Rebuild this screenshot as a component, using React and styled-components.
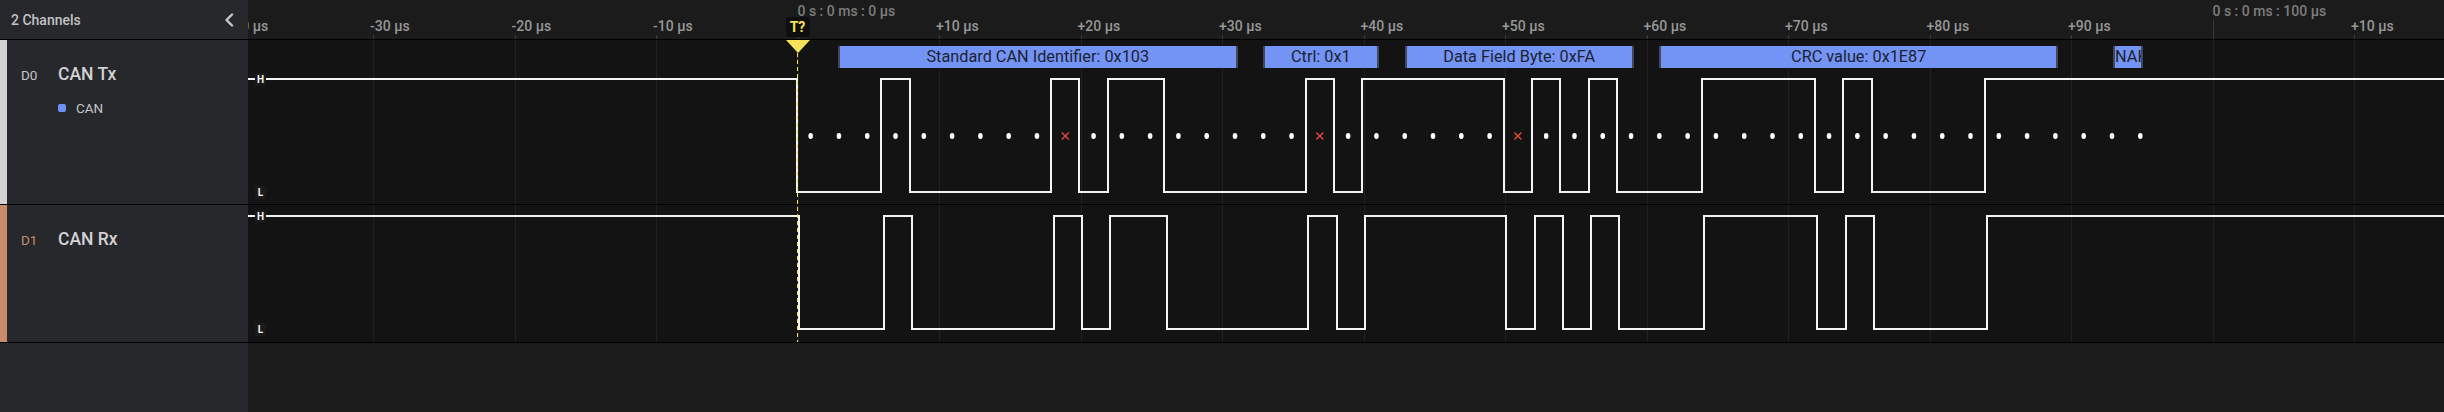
import React from "react";
import styled, { createGlobalStyle } from "styled-components";

const SIDEBAR_W = 248;
const TRACK_W = 2444 - SIDEBAR_W;
const T0 = 797.5 - SIDEBAR_W; // trigger, in track coordinates
const PX_PER_10US = 141.5;
const BIT = 28.29;

// CAN frame bits (1 = recessive/high), id 0x103, dlc 1, data 0xFA, crc 0x1E87, NAK
const BITS = [
  0, 0, 0, 1, 0, 0, 0, 0, 0, 1, 0, 1, 1, 0, 0, 0, 0, 0, 1, 0, 1, 1, 1, 1, 1, 0,
  1, 0, 1, 0, 0, 0, 1, 1, 1, 1, 0, 1, 0, 0, 0, 0, 1, 1, 1, 1, 1, 1,
];
const STUFF_BITS = [9, 18, 25];

const ANNOTATIONS = [
  { from: 838, to: 1237.5, label: "Standard CAN Identifier: 0x103" },
  { from: 1262.7, to: 1379, label: "Ctrl: 0x1" },
  { from: 1404.7, to: 1633.6, label: "Data Field Byte: 0xFA" },
  { from: 1659.2, to: 2058.3, label: "CRC value: 0x1E87" },
  { from: 2113, to: 2143.3, label: "NAK" },
];

const GlobalStyle = createGlobalStyle`
  html, body {
    margin: 0;
    padding: 0;
    height: 412px;
    overflow: hidden;
    background: #1b1b1b;
  }
  body {
    font-family: Roboto, "Noto Sans", "Liberation Sans", sans-serif;
  }
`;

const Page = styled.div`
  display: flex;
  width: 2444px;
  height: 412px;
  background: #1b1b1b;
`;

const Sidebar = styled.aside`
  width: ${SIDEBAR_W}px;
  flex: none;
  display: flex;
  flex-direction: column;
  background: #27282c;
`;

const SidebarHeader = styled.div`
  height: 39px;
  border-bottom: 1px solid #000;
  display: flex;
  align-items: center;
  justify-content: space-between;
  padding: 0 14px 0 11px;
`;

const HeaderTitle = styled.span`
  font-size: 14px;
  font-weight: 500;
  color: #c2c2c4;
`;

const ChannelRow = styled.div`
  height: ${(p) => p.h}px;
  border-bottom: 1px solid #000;
  display: flex;
`;

const ColorBar = styled.div`
  width: 7px;
  flex: none;
  background: ${(p) => p.color};
`;

const ChannelInfo = styled.div`
  padding: 23px 0 0 14px;
  display: flex;
  flex-direction: column;
`;

const NameLine = styled.div`
  display: flex;
  align-items: baseline;
  line-height: 22px;
`;

const ChannelIndex = styled.span`
  width: 37px;
  font-size: 13.5px;
  color: ${(p) => p.color};
`;

const ChannelName = styled.span`
  font-size: 17.5px;
  font-weight: 500;
  color: #d2d2d4;
`;

const AnalyzerLine = styled.div`
  margin: 14px 0 0 37px;
  display: flex;
  align-items: center;
  gap: 10px;
  font-size: 13.5px;
  line-height: 16px;
  color: #c4c4c6;
`;

const AnalyzerSwatch = styled.span`
  width: 8px;
  height: 8px;
  border-radius: 2px;
  background: #6f90f4;
`;

const SidebarRest = styled.div`
  flex: 1;
`;

const Main = styled.main`
  flex: 1;
  position: relative;
  overflow: hidden;
  display: flex;
  flex-direction: column;
`;

const Ruler = styled.div`
  height: 39px;
  flex: none;
  border-bottom: 1px solid #000;
  background: #1b1b1b;
  position: relative;
`;

const Tick = styled.div`
  position: absolute;
  bottom: 0;
  width: 1px;
  height: ${(p) => (p.major ? 20 : 4)}px;
  background: #393939;
`;

const RulerLabel = styled.span`
  position: absolute;
  top: ${(p) => (p.upper ? 3 : 18)}px;
  font-size: 14px;
  font-weight: 500;
  line-height: 16px;
  white-space: nowrap;
  color: ${(p) => (p.upper ? "#7d7d7d" : "#979797")};
`;

const Track = styled.div`
  height: ${(p) => p.h}px;
  flex: none;
  border-bottom: 1px solid #000;
  background: #131313;
  position: relative;
`;

const Wave = styled.svg`
  display: block;
`;

const LevelTag = styled.span`
  position: absolute;
  left: 7px;
  width: 11px;
  height: 13px;
  border-radius: 2px;
  background: #1a1a1a;
  color: #f4f4f4;
  font-size: 10px;
  font-weight: 700;
  line-height: 13px;
  text-align: center;
`;

const Annotation = styled.div`
  position: absolute;
  top: 6px;
  height: 22px;
  box-sizing: border-box;
  border-left: 2px solid #414858;
  border-right: 2px solid #414858;
  background: #7394f4;
  color: #1c2232;
  font-size: 16.3px;
  line-height: 22px;
  text-align: center;
  white-space: nowrap;
  overflow: hidden;
`;

const Filler = styled.div`
  flex: 1;
  background: #1b1b1b;
`;

const Trigger = styled.div`
  position: absolute;
  top: 17px;
  width: 24px;
  display: flex;
  flex-direction: column;
  align-items: center;
  pointer-events: none;
`;

const TriggerTag = styled.div`
  width: 24px;
  height: 20px;
  border-radius: 2px;
  background: #0e0e0e;
  color: #f4e25a;
  font-size: 14px;
  font-weight: 700;
  line-height: 20px;
  text-align: center;
`;

const TriggerArrow = styled.div`
  margin-top: 3px;
  width: 0;
  height: 0;
  border-left: 12px solid transparent;
  border-right: 12px solid transparent;
  border-top: 13px solid #f4e25a;
`;

const TriggerLine = styled.div`
  width: 1px;
  height: 289px;
  background: repeating-linear-gradient(to bottom, #f4e25a 0 4px, transparent 4px 7px);
`;

const gridXs = [];
for (let k = -4; k <= 11; k++) gridXs.push({ k, x: T0 + k * PX_PER_10US });

function rulerText(k) {
  if (k === 0) return "0 s : 0 ms : 0 µs";
  if (k === 10) return "0 s : 0 ms : 100 µs";
  if (k > 10) return `+${(k - 10) * 10} µs`;
  if (k < 0) return `-${-k * 10} µs`;
  return `+${k * 10} µs`;
}

function wavePath(offset, hiY, loY) {
  let d = `M0 ${hiY}`;
  let level = 1;
  BITS.forEach((b, k) => {
    if (b !== level) {
      const x = Math.round(offset + k * BIT);
      d += ` H${x} V${b ? hiY : loY}`;
      level = b;
    }
  });
  return d + ` H${TRACK_W}`;
}

const Grid = ({ h }) =>
  gridXs.map(({ k, x }) => (
    <line key={k} x1={Math.round(x) + 0.5} x2={Math.round(x) + 0.5} y1={0} y2={h} stroke="#212121" strokeWidth="1" />
  ));

const BitMarks = ({ offset, y }) =>
  BITS.map((_, k) => {
    const cx = offset + (k + 0.5) * BIT;
    if (STUFF_BITS.includes(k)) {
      return (
        <g key={k} stroke="#d9473a" strokeWidth="1.6">
          <line x1={cx - 3.5} y1={y - 3.5} x2={cx + 3.5} y2={y + 3.5} />
          <line x1={cx - 3.5} y1={y + 3.5} x2={cx + 3.5} y2={y - 3.5} />
        </g>
      );
    }
    return <ellipse key={k} cx={cx} cy={y} rx="2.3" ry="2.9" fill="#fff" />;
  });

const ChannelTrack = ({ h, hiY, loY, offset, children, marks }) => (
  <Track h={h}>
    <Wave width={TRACK_W} height={h}>
      <Grid h={h} />
      {marks && <BitMarks offset={offset} y={96} />}
      <path d={wavePath(offset, hiY, loY)} fill="none" stroke="#f4f4f4" strokeWidth="2" shapeRendering="crispEdges" />
    </Wave>
    <LevelTag style={{ top: hiY - 6 }}>H</LevelTag>
    <LevelTag style={{ top: loY - 6 }}>L</LevelTag>
    {children}
  </Track>
);

const ChevronLeft = () => (
  <svg width="10" height="14" viewBox="0 0 10 14">
    <polyline points="8,1.5 2.5,7 8,12.5" fill="none" stroke="#c8c8ca" strokeWidth="2.4" strokeLinecap="round" strokeLinejoin="round" />
  </svg>
);

const App = () => (
  <>
    <GlobalStyle />
    <Page>
      <Sidebar>
        <SidebarHeader>
          <HeaderTitle>2 Channels</HeaderTitle>
          <ChevronLeft />
        </SidebarHeader>
        <ChannelRow h={164}>
          <ColorBar color="#d3d3d3" />
          <ChannelInfo>
            <NameLine>
              <ChannelIndex color="#c4c4c6">D0</ChannelIndex>
              <ChannelName>CAN Tx</ChannelName>
            </NameLine>
            <AnalyzerLine>
              <AnalyzerSwatch />
              CAN
            </AnalyzerLine>
          </ChannelInfo>
        </ChannelRow>
        <ChannelRow h={137}>
          <ColorBar color="#c88c6c" />
          <ChannelInfo>
            <NameLine>
              <ChannelIndex color="#c48a6b">D1</ChannelIndex>
              <ChannelName>CAN Rx</ChannelName>
            </NameLine>
          </ChannelInfo>
        </ChannelRow>
        <SidebarRest />
      </Sidebar>

      <Main>
        <Ruler>
          {gridXs.map(({ k, x }) => (
            <React.Fragment key={k}>
              <Tick major={k === 0 || k === 10} style={{ left: Math.round(x) }} />
              {k !== 0 && k !== 10 ? (
                <RulerLabel style={{ left: x - 3 }}>{rulerText(k)}</RulerLabel>
              ) : (
                <RulerLabel upper style={{ left: x }}>
                  {rulerText(k)}
                </RulerLabel>
              )}
            </React.Fragment>
          ))}
        </Ruler>

        <ChannelTrack h={164} hiY={39} loY={152} offset={796.5 - SIDEBAR_W} marks>
          {ANNOTATIONS.map((a) => (
            <Annotation key={a.label} style={{ left: a.from - SIDEBAR_W, width: a.to - a.from }}>
              {a.label}
            </Annotation>
          ))}
        </ChannelTrack>
        <ChannelTrack h={137} hiY={11} loY={124} offset={799 - SIDEBAR_W} />
        <Filler />

        <Trigger style={{ left: T0 - 12 }}>
          <TriggerTag>T?</TriggerTag>
          <TriggerArrow />
          <TriggerLine />
        </Trigger>
      </Main>
    </Page>
  </>
);

export default App;
